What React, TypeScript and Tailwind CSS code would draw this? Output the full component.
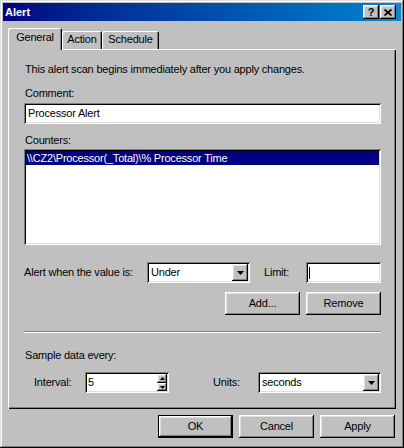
import React from "react";

const raised =
  "shadow-[inset_-1px_-1px_#000,inset_1px_1px_#fff,inset_-2px_-2px_#808080,inset_2px_2px_#dfdfdf]";
const sunken =
  "shadow-[inset_1px_1px_#808080,inset_-1px_-1px_#fff,inset_2px_2px_#000,inset_-2px_-2px_#dfdfdf]";

function DownArrow() {
  return (
    <svg width="7" height="4" viewBox="0 0 7 4">
      <polygon points="0,0 7,0 3.5,4" fill="#000" />
    </svg>
  );
}

function Combo({ value, w }: { value: string; w: string }) {
  return (
    <div className={`${w} h-[21px] bg-white flex items-center ${sunken}`}>
      <span className="flex-1 pl-[4px]">{value}</span>
      <div className={`w-[16px] h-[17px] mr-[2px] bg-[#c0c0c0] flex items-center justify-center ${raised}`}>
        <DownArrow />
      </div>
    </div>
  );
}

function Btn({ label, def }: { label: string; def?: boolean }) {
  return (
    <div
      className={`w-[75px] h-[23px] bg-[#c0c0c0] flex items-center justify-center ${raised} ${
        def ? "border border-black" : ""
      }`}
    >
      {label}
    </div>
  );
}

export default function App() {
  return (
    <div className="w-[404px] h-[448px] bg-[#c0c0c0] p-[3px] flex flex-col text-[11px] leading-[13px] tracking-[-0.2px] text-black font-['Liberation_Sans',Arial,sans-serif] shadow-[inset_-1px_-1px_#000,inset_1px_1px_#dfdfdf,inset_-2px_-2px_#808080,inset_2px_2px_#fff]">
      {/* Title bar */}
      <div className="h-[18px] flex items-center bg-linear-to-r from-[#000080] to-[#1084d0] pl-[2px] pr-[5px]">
        <span className="flex-1 font-bold text-white tracking-normal">Alert</span>
        <div className="flex gap-[1px]">
          <div className={`w-[16px] h-[14px] bg-[#c0c0c0] flex items-center justify-center font-bold text-[11px] leading-none ${raised}`}>
            ?
          </div>
          <div className={`w-[16px] h-[14px] bg-[#c0c0c0] flex items-center justify-center ${raised}`}>
            <svg width="8" height="7" viewBox="0 0 8 7">
              <path d="M0.5 0.5 L7.5 6.5 M7.5 0.5 L0.5 6.5" stroke="#000" strokeWidth="1.7" />
            </svg>
          </div>
        </div>
      </div>

      <div className="px-[5px] pt-[7px] flex flex-col">
        {/* Tabs */}
        <div className="h-[21px] flex items-end">
          <div className="relative z-10 w-[54px] h-[22px] mb-[-1px] bg-[#c0c0c0] flex justify-center pt-[3px] shadow-[inset_1px_1px_#fff,inset_-1px_0_#000,inset_-2px_0_#808080] rounded-tl-[2px] rounded-tr-[2px]">
            General
          </div>
          <div className="w-[40px] h-[18px] bg-[#c0c0c0] flex justify-center pt-[2px] shadow-[inset_1px_1px_#fff,inset_-1px_0_#000,inset_-2px_0_#808080] rounded-tl-[2px] rounded-tr-[2px]">
            Action
          </div>
          <div className="w-[57px] h-[18px] bg-[#c0c0c0] flex justify-center pt-[2px] shadow-[inset_1px_1px_#fff,inset_-1px_0_#000,inset_-2px_0_#808080] rounded-tl-[2px] rounded-tr-[2px]">
            Schedule
          </div>
        </div>

        {/* Panel */}
        <div className="h-[360px] pl-[16px] pr-[15px] pt-[14px] flex flex-col shadow-[inset_1px_1px_#fff,inset_-1px_-1px_#000,inset_-2px_-2px_#808080]">
          <div className="pl-[1px]">This alert scan begins immediately after you apply changes.</div>

          <div className="mt-[11px] pl-[1px]">Comment:</div>
          <div className={`mt-[3px] h-[21px] bg-white flex items-center pl-[4px] ${sunken}`}>Processor Alert</div>

          <div className="mt-[10px] pl-[1px]">Counters:</div>
          <div className={`mt-[2px] h-[96px] bg-white p-[2px] ${sunken}`}>
            <div className="h-[14px] bg-[#000080] text-white flex items-center pl-[1px]">
              {"\\\\CZ2\\Processor(_Total)\\% Processor Time"}
            </div>
          </div>

          <div className="mt-[17px] h-[21px] flex items-center">
            <span className="w-[123px]">Alert when the value is:</span>
            <Combo value="Under" w="w-[103px]" />
            <span className="ml-[14px] w-[42px]">Limit:</span>
            <div className={`w-[75px] h-[21px] bg-white flex items-center pl-[3px] ${sunken}`}>
              <div className="w-[1px] h-[12px] bg-black" />
            </div>
          </div>

          <div className="mt-[9px] flex justify-end gap-[6px]">
            <Btn label="Add..." />
            <Btn label="Remove" />
          </div>

          <div className="mt-[16px] h-[2px] border-t border-t-[#808080] border-b border-b-white" />

          <div className="mt-[16px] pl-[1px]">Sample data every:</div>

          <div className="mt-[10px] h-[21px] flex items-center">
            <span className="ml-[10px] w-[51px]">Interval:</span>
            <div className={`w-[84px] h-[21px] bg-white flex items-center ${sunken}`}>
              <span className="flex-1 pl-[3px]">5</span>
              <div className="w-[10px] h-[17px] mr-[2px] flex flex-col">
                <div className={`h-[9px] bg-[#c0c0c0] flex items-center justify-center ${raised}`}>
                  <svg width="5" height="3" viewBox="0 0 5 3">
                    <polygon points="0,3 5,3 2.5,0" fill="#000" />
                  </svg>
                </div>
                <div className={`h-[8px] bg-[#c0c0c0] flex items-center justify-center ${raised}`}>
                  <svg width="5" height="3" viewBox="0 0 5 3">
                    <polygon points="0,0 5,0 2.5,3" fill="#000" />
                  </svg>
                </div>
              </div>
            </div>
            <span className="ml-[44px] w-[45px]">Units:</span>
            <Combo value="seconds" w="w-[123px]" />
          </div>
        </div>

        {/* Bottom buttons */}
        <div className="mt-[6px] flex justify-end gap-[6px] pr-[1px]">
          <Btn label="OK" def />
          <Btn label="Cancel" />
          <Btn label="Apply" />
        </div>
      </div>
    </div>
  );
}
